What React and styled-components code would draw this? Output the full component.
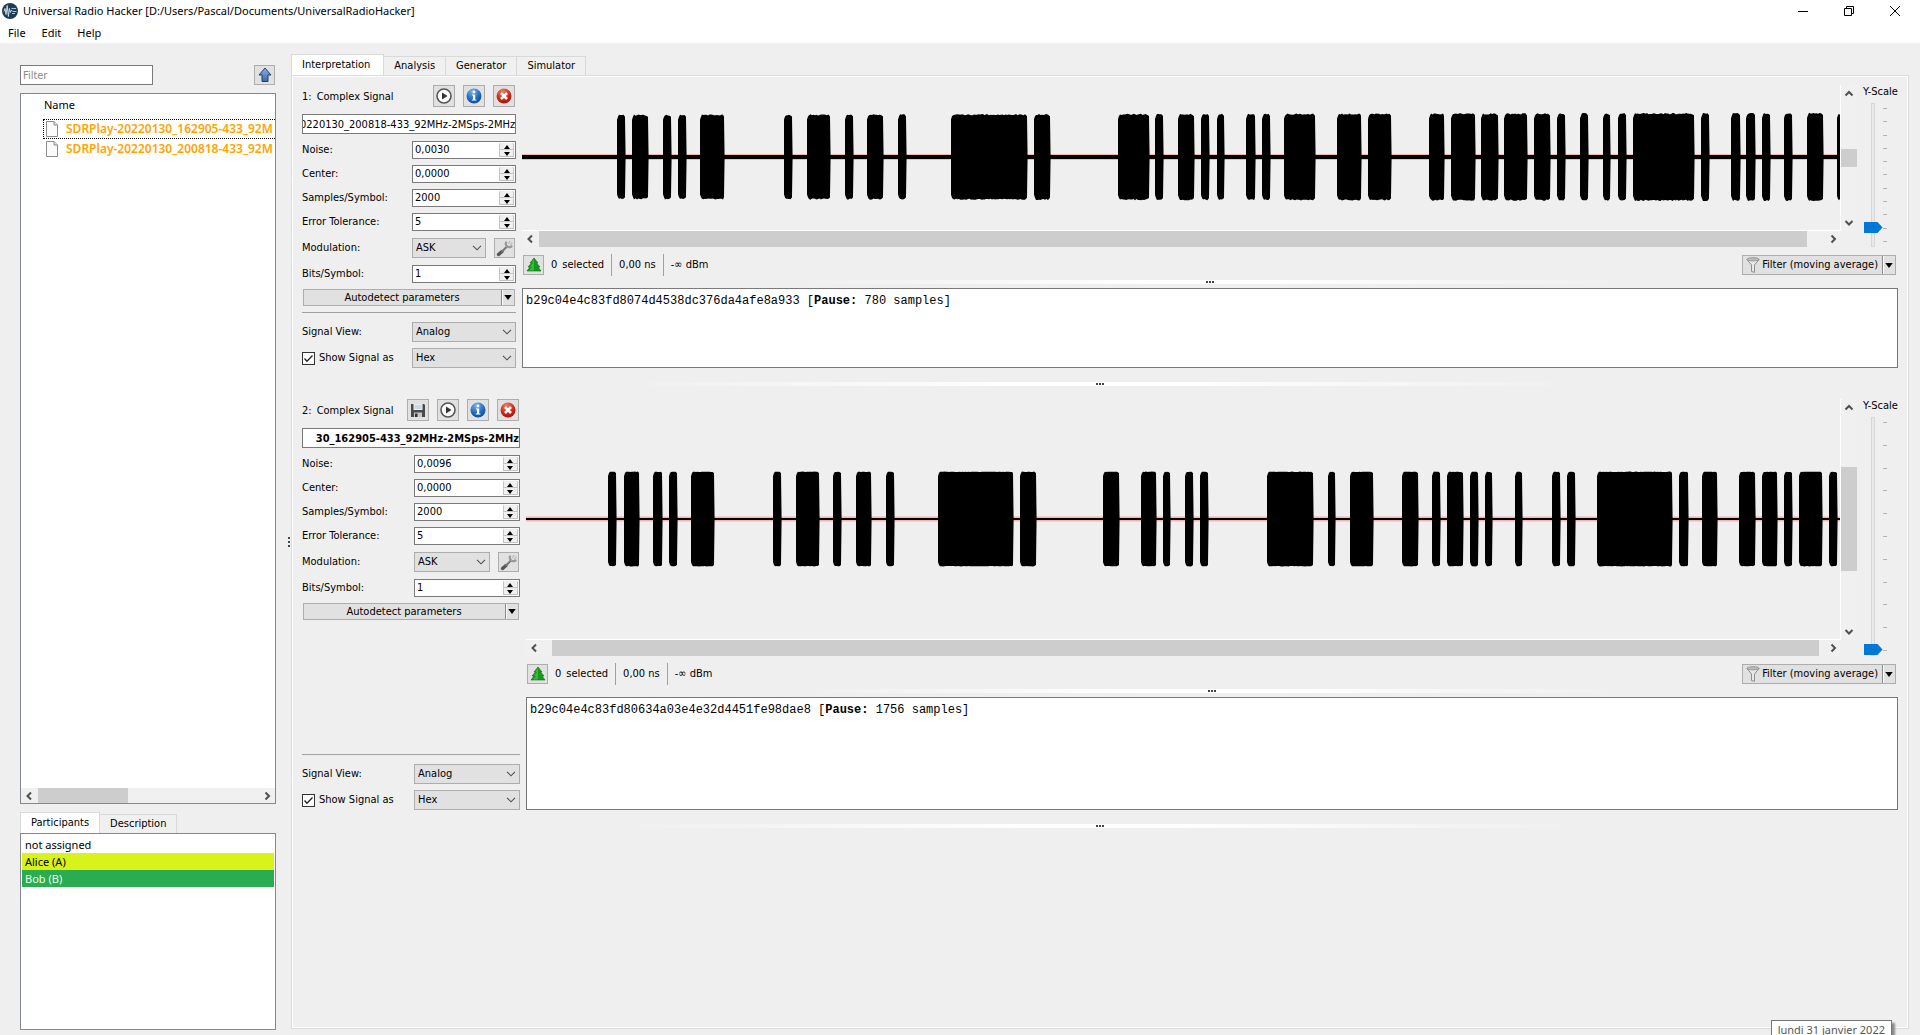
import React from "react"
import styled, { createGlobalStyle } from "styled-components"

const GlobalStyle = createGlobalStyle`
  * {
    box-sizing: border-box;
  }
  body {
    margin: 0;
    background: #efefef;
    color: #000;
    font: 11px/14px "DejaVu Sans Condensed", "DejaVu Sans", sans-serif;
  }
  button, input, select {
    font: inherit;
    color: inherit;
    margin: 0;
    padding: 0;
    border-radius: 0;
  }
`

const segoe = `"Noto Sans", "Open Sans", sans-serif`

/* [start, end] of every burst, in samples on screen */
const burstsA = [
  [95, 103], [110, 126], [141, 149], [156, 164], [178, 202], [262, 270], [285, 308],
  [323, 331], [345, 361], [376, 384], [429, 505], [512, 528], [596, 627], [633, 641],
  [656, 672], [679, 687], [695, 702], [724, 733], [740, 748], [762, 793], [815, 839],
  [846, 869], [907, 922], [929, 953], [959, 976], [982, 1005], [1012, 1028], [1035, 1043],
  [1058, 1066], [1081, 1088], [1096, 1104], [1111, 1172], [1179, 1187], [1209, 1218],
  [1224, 1233], [1240, 1248], [1262, 1270], [1285, 1301], [1315, 1318],
]
const burstsB = [
  [82, 90], [98, 113], [127, 136], [143, 151], [165, 188], [247, 255], [270, 293],
  [307, 315], [330, 345], [360, 368], [412, 487], [494, 510], [577, 593], [615, 630],
  [637, 644], [659, 667], [674, 682], [741, 787], [802, 809], [824, 847], [876, 892],
  [906, 914], [921, 937], [944, 952], [959, 966], [989, 996], [1026, 1034], [1041, 1049],
  [1071, 1146], [1153, 1162], [1176, 1191], [1213, 1229], [1236, 1251], [1258, 1266],
  [1273, 1296], [1303, 1311],
]

const signals = [
  {
    id: 1,
    name: "0220130_200818-433_92MHz-2MSps-2MHz",
    noise: "0,0030",
    controlsWidth: 214,
    viewHeight: 146,
    textHeight: 80,
    bursts: burstsA,
    width: 1318,
    amp: [41, 43],
    jitter: 1.3,
    line: 2,
    noiseBand: 3,
    hThumb: ["0%", "98.7%"],
    vThumb: ["42%", "16%"],
    scale: 10,
    hex: "b29c04e4c83fd8074d4538dc376da4afe8a933",
    pause: "780",
  },
  {
    id: 2,
    name: "30_162905-433_92MHz-2MSps-2MHz",
    noise: "0,0096",
    unsaved: true,
    controlsWidth: 218,
    viewHeight: 241,
    textHeight: 113,
    bursts: burstsB,
    width: 1314,
    amp: [47, 47],
    jitter: 0.4,
    line: 1,
    noiseBand: 2.5,
    hThumb: ["0.7%", "98.9%"],
    vThumb: ["24.6%", "50.2%"],
    scale: 0,
    hex: "b29c04e4c83fd80634a03e4e32d4451fe98dae8",
    pause: "1756",
  },
]

const Window = styled.div`
  position: relative;
  display: flex;
  flex-direction: column;
  min-height: 100vh;
  overflow: hidden;
`
const TitleBar = styled.header`
  display: flex;
  align-items: center;
  gap: 5px;
  height: 22px;
  padding: 0 2px;
  background: #fff;
  font: 11px/20px ${segoe};
`
const Title = styled.span`
  flex: 1;
`
const WindowButtons = styled.div`
  display: flex;
`
const WindowButton = styled.button`
  display: flex;
  justify-content: center;
  width: 46px;
  border: 0;
  background: none;
`
const MenuBar = styled.nav`
  display: flex;
  align-items: center;
  gap: 16px;
  height: 21px;
  padding: 0 8px;
  background: #fff;
  font: 11px/16px ${segoe};
`
const MenuItem = styled.button`
  border: 0;
  background: none;
`
const Body = styled.div`
  display: flex;
  flex: 1;
  padding: 11px 11px 5px 20px;
`

const Sidebar = styled.aside`
  display: flex;
  flex-direction: column;
  width: 256px;
  padding-top: 11px;
`
const FilterRow = styled.div`
  display: flex;
  justify-content: space-between;
  margin-bottom: 8px;
  padding-right: 1px;
`
const FilterInput = styled.input`
  width: 133px;
  height: 20px;
  padding: 0 2px;
  border: 1px solid #7a7a7a;
  background: #fff;
  &::placeholder {
    color: #8a8a8a;
  }
`
const IconButton = styled.button`
  display: flex;
  align-items: center;
  justify-content: center;
  width: ${p => p.$w || 22}px;
  height: ${p => p.$h || 22}px;
  border: 1px solid #adadad;
  background: #e1e1e1;
`
const Tree = styled.div`
  display: flex;
  flex-direction: column;
  flex: 1;
  border: 1px solid #828790;
  background: #fff;
  font: 12px/18px ${segoe};
`
const TreeHeader = styled.div`
  padding: 2px 0 5px 23px;
  font-size: 11px;
`
const TreeItem = styled.button`
  display: flex;
  align-items: center;
  gap: 8px;
  height: 20px;
  margin-left: 22px;
  padding: 0 0 0 2px;
  border: 1px dotted ${p => (p.$focused ? "#000" : "transparent")};
  border-right: 0;
  background: none;
  color: #ffa500;
  font-weight: 600;
  white-space: nowrap;
  overflow: hidden;
`
const TreeFill = styled.div`
  flex: 1;
`

const Tabs = styled.div`
  display: flex;
  align-items: flex-end;
  height: 21px;
`
const Tab = styled.button`
  height: ${p => (p.$active ? 21 : 19)}px;
  padding: 0 10px;
  border: 1px solid #d9d9d9;
  border-width: 1px 1px 0 ${p => (p.$active ? 1 : 0)}px;
  background: ${p => (p.$active ? "#fff" : "#f0f0f0")};
`
const MainTabs = styled(Tabs)`
  ${Tab}:first-child {
    padding-right: 13px;
  }
`
const SideTabs = styled(Tabs)`
  margin-top: 8px;
`
const Participants = styled.ul`
  height: 197px;
  margin: 0;
  padding: 2px 1px;
  border: 1px solid #828790;
  background: #fff;
  list-style: none;
  font: 11px/17px ${segoe};
`
const Participant = styled.li`
  padding-left: 3px;
  background: ${p => p.$bg || "#fff"};
  color: ${p => p.$fg || "#000"};
`

const SideHandle = styled.div`
  display: flex;
  flex-direction: column;
  align-items: flex-end;
  justify-content: center;
  gap: 2px;
  width: 15px;
  padding-right: 1px;
`
const Dot = styled.i`
  width: 2px;
  height: 2px;
  background: #444;
`
const Main = styled.main`
  display: flex;
  flex-direction: column;
  flex: 1;
  min-width: 0;
`
const Pane = styled.div`
  flex: 1;
  margin-bottom: 1px;
  padding: 9px 10px;
  border: 1px solid #dcdcdc;
  box-shadow: inset 1px 1px 0 #fff, inset -1px -1px 0 #fff;
`

const Frame = styled.section`
  display: flex;
  gap: 6px;
`
const Controls = styled.div`
  display: flex;
  flex-direction: column;
  flex-shrink: 0;
  gap: 6px;
  width: ${p => p.$width}px;
`
const ControlsHeader = styled.div`
  display: flex;
  gap: 8px;
  height: 23px;
  padding-right: 1px;
`
const SignalTitle = styled.span`
  display: flex;
  flex: 1;
  gap: 5px;
  padding-top: 5px;
  white-space: nowrap;
`
const NameInput = styled.input`
  width: 100%;
  height: 20px;
  border: 1px solid #7a7a7a;
  background: #fff;
  text-align: right;
  font-weight: ${p => (p.$bold ? "bold" : "normal")};
`
const Fields = styled.div`
  display: grid;
  grid-template-columns: minmax(0, 110fr) minmax(0, 104fr);
  align-items: center;
  gap: 6px 0;
  label {
    white-space: nowrap;
  }
`
const Parameters = styled(Fields)`
  padding-top: 1px;
`
const SpinBox = styled.span`
  display: flex;
  height: 18px;
  padding: 1px;
  border: 1px solid #7a7a7a;
  background: #fff;
  input {
    flex: 1;
    min-width: 0;
    border: 0;
    outline: 0;
    padding-left: 1px;
    background: none;
  }
`
const SpinButtons = styled.span`
  display: flex;
  flex-direction: column;
  width: 15px;
  button {
    display: flex;
    align-items: center;
    justify-content: center;
    height: 7px;
    border: 1px solid #c3c3c3;
    border-top-color: #f0f0f0;
    background: #f0f0f0;
  }
`
const SelectBox = styled.span`
  position: relative;
  display: block;
  flex: 1;
  select {
    display: block;
    width: 100%;
    height: 20px;
    padding-left: 3px;
    border: 1px solid #adadad;
    background: #e1e1e1;
    appearance: none;
  }
  svg {
    position: absolute;
    right: 4px;
    top: 7px;
    pointer-events: none;
  }
`
const ModulationRow = styled.span`
  display: flex;
  align-items: center;
  gap: 8px;
  height: 22px;
  margin-right: 1px;
`
const SplitButton = styled.span`
  display: flex;
  height: ${p => p.$h}px;
  margin: 0 1px;
  border: 1px solid #adadad;
  background: #e1e1e1;
  button {
    display: flex;
    align-items: center;
    justify-content: center;
    gap: 2px;
    border: 0;
    background: none;
    white-space: nowrap;
  }
  button:first-child {
    flex: 1;
    padding: 0 4px 0 3px;
  }
  button:last-child {
    width: 13px;
    border-left: 1px solid #8a8a8a;
    box-shadow: inset 1px 0 0 #fff;
  }
`
const Options = styled(Fields)`
  margin-top: auto;
  padding-top: 9px;
  border-top: 1px solid #a0a0a0;
`
const CheckLabel = styled.label`
  position: relative;
  display: flex;
  align-items: center;
  gap: 4px;
  input {
    width: 13px;
    height: 13px;
    border: 1px solid #333;
    background: #fff;
    appearance: none;
  }
  svg {
    position: absolute;
    left: 1px;
    top: 2px;
  }
`

const Right = styled.div`
  display: flex;
  flex-direction: column;
  flex: 1;
  min-width: 0;
`
const Upper = styled.div`
  display: flex;
  gap: 6px;
`
const Scene = styled.div`
  display: grid;
  grid-template-columns: minmax(0, 1fr) 16px;
  flex: 1;
  min-width: 0;
`
const Wave = styled.svg`
  display: block;
  width: 100%;
  height: ${p => p.$h}px;
  border-right: 1px solid #fff;
  border-bottom: 1px solid #fff;
`
const Scroll = styled.div`
  display: flex;
  flex-direction: ${p => (p.$vertical ? "column" : "row")};
  ${p => (p.$vertical ? "" : `height: ${p.$size || 16}px;`)}
  background: #f0f0f0;
`
const ScrollArrow = styled.button`
  display: flex;
  align-items: center;
  justify-content: center;
  width: ${p => (p.$vertical ? 16 : 17)}px;
  height: ${p => (p.$vertical ? "17px" : "100%")};
  border: 0;
  background: none;
`
const Track = styled.div`
  position: relative;
  flex: 1;
`
const Thumb = styled.div`
  position: absolute;
  inset: 0;
  background: #cdcdcd;
`
const YScale = styled.div`
  display: flex;
  flex-direction: column;
  width: 35px;
  height: ${p => p.$h}px;
  gap: 4px;
  label {
    white-space: nowrap;
  }
`
const SliderRow = styled.div`
  display: flex;
  flex: 1;
  min-height: 0;
`
const Slider = styled.input`
  width: 19px;
  height: 100%;
  writing-mode: vertical-lr;
  direction: rtl;
  appearance: none;
  background: none;
  &::-webkit-slider-runnable-track {
    width: 4px;
    height: 100%;
    border: 1px solid #d6d6d6;
    background: #e7eaea;
  }
  &::-webkit-slider-thumb {
    appearance: none;
    width: 19px;
    height: 11px;
    margin-right: -8px;
    margin-left: -8px;
    background: #0078d7;
    clip-path: polygon(0 0, 14px 0, 100% 50%, 14px 100%, 0 100%);
  }
`
const Ticks = styled.div`
  display: flex;
  flex-direction: column;
  justify-content: space-between;
  padding: 5px 0;
  margin-left: 1px;
  i {
    width: 4px;
    height: 1px;
    background: #b5b5b5;
  }
`
const Toolbar = styled.div`
  display: flex;
  align-items: center;
  gap: 7px;
  height: 20px;
  margin: 8px 1px 0;
`
const Count = styled.span`
  display: flex;
  gap: 5px;
`
const Divider = styled.i`
  width: 1px;
  height: 22px;
  background: #a0a0a0;
`
const Spacer = styled.span`
  flex: 1;
`
const Handle = styled.div`
  display: flex;
  align-items: center;
  justify-content: center;
  gap: 1px;
  height: ${p => p.$h}px;
  background: linear-gradient(90deg, transparent 20%, #fff 45%, #fff 55%, transparent 80%) center / 100% 4px no-repeat;
`
const MessageText = styled.div`
  height: ${p => p.$h}px;
  padding: 5px 3px;
  border: 1px solid #7a7a7a;
  background: #fff;
  font: 12px/14px "Liberation Mono", monospace;
`
const DateTip = styled.div`
  position: absolute;
  right: 28px;
  bottom: -6px;
  height: 21px;
  padding: 0 6px;
  border: 1px solid #767676;
  background: #fff;
  color: #575757;
  box-shadow: 3px 3px 2px #8a8a8a;
  font: 11px/18px ${segoe};
`

const chevrons = {
  left: "M6 1.5 2.5 5 6 8.5",
  right: "M3.5 1.5 7 5 3.5 8.5",
  up: "M1.5 6.5 5 3 8.5 6.5",
  down: "M1.5 3 5 6.5 8.5 3",
}
const Chevron = ({ dir }) => (
  <svg width="10" height="10" viewBox="0 0 10 10" fill="none" stroke="#505050" strokeWidth="2">
    <path d={chevrons[dir]} />
  </svg>
)
const SelectArrow = () => (
  <svg width="10" height="6" viewBox="0 0 10 6" fill="none" stroke="#505050" strokeWidth="1.1">
    <path d="M1 .8 5 4.8 9 .8" />
  </svg>
)
const Triangle = ({ up, size = 6 }) => (
  <svg width={size} height={size > 6 ? 5 : 4} viewBox="0 0 6 4">
    <path d={up ? "M3 0 6 4H0z" : "M0 0h6L3 4z"} />
  </svg>
)
const AppIcon = () => (
  <svg width="16" height="16" viewBox="0 0 16 16">
    <circle cx="8" cy="8" r="8" fill="#1d3c55" />
    <path d="M2 8.5l1-3 1 6 1.2-9 1.2 11 1-8 1 4 .8-2h1" fill="none" stroke="#d5e6f1" strokeWidth=".9" />
    <path d="M9.5 5.5h4.5M10.5 8.5h4M10 10.5h3" stroke="#a9c7da" strokeWidth="1" />
  </svg>
)
const UpIcon = () => (
  <svg width="14" height="16" viewBox="0 0 14 16">
    <defs>
      <linearGradient id="up" x2="0" y2="1">
        <stop offset="0" stopColor="#8fb0dc" />
        <stop offset="1" stopColor="#3c67a8" />
      </linearGradient>
    </defs>
    <path d="M7 1 13 8H10v6.5H4V8H1z" fill="url(#up)" stroke="#1f3f70" strokeLinejoin="round" />
  </svg>
)
const FileIcon = () => (
  <svg width="12" height="16" viewBox="0 0 12 16" fill="#fbfbfb" stroke="#8c8c8c">
    <path d="M.5.5h7.5l3.5 3.5v11.5H.5z" />
    <path d="M8 .5V4h3.5" fill="#e2e2e2" />
  </svg>
)
const SaveIcon = () => (
  <svg width="16" height="16" viewBox="0 0 16 16">
    <path d="M1 2h13l1 1v12H1z" fill="#4a4a4a" />
    <path d="M3.5 2h9v6h-9z" fill="#e9f0f4" />
    <path d="M4.5 4h7M4.5 6h7" stroke="#9fb4be" strokeWidth=".8" />
    <path d="M4 10.5h8V15H4z" fill="#c9c9c9" />
    <path d="M5 11.5h2.5V15H5z" fill="#333" />
  </svg>
)
const PlayIcon = () => (
  <svg width="16" height="16" viewBox="0 0 16 16">
    <circle cx="8" cy="8" r="7" fill="#fafafa" stroke="#555" strokeWidth="1.6" />
    <path d="M6 4.5 11.5 8 6 11.5z" fill="#333" />
  </svg>
)
const InfoIcon = () => (
  <svg width="16" height="16" viewBox="0 0 16 16">
    <defs>
      <radialGradient id="info" cx=".4" cy=".2" r=".9">
        <stop offset="0" stopColor="#7db4ec" />
        <stop offset=".6" stopColor="#1f66b8" />
        <stop offset="1" stopColor="#0d458f" />
      </radialGradient>
    </defs>
    <circle cx="8" cy="8" r="7.5" fill="url(#info)" />
    <circle cx="8" cy="4" r="1.4" fill="#fff" />
    <path d="M6 6.5h3.2V11.5h1.2v1H5.8v-1H7V7.5H6z" fill="#fff" />
  </svg>
)
const CloseIcon = () => (
  <svg width="16" height="16" viewBox="0 0 16 16">
    <defs>
      <radialGradient id="close" cx=".4" cy=".2" r=".9">
        <stop offset="0" stopColor="#f07a62" />
        <stop offset=".6" stopColor="#cc2617" />
        <stop offset="1" stopColor="#930f06" />
      </radialGradient>
    </defs>
    <circle cx="8" cy="8" r="7.5" fill="url(#close)" />
    <path d="M5 5l6 6M11 5l-6 6" stroke="#fff" strokeWidth="2.6" />
  </svg>
)
const WrenchIcon = () => (
  <svg width="17" height="17" viewBox="0 0 17 17" fill="none" strokeLinecap="round">
    <path d="M2.5 14.5 6 11.5" stroke="#555" strokeWidth="3.4" />
    <path d="M6 11.5 11 6.5" stroke="#777" strokeWidth="2" />
    <path d="M10 2.5c-1 3 2 6 5.5 4" stroke="#999" strokeWidth="2.2" />
    <path d="M12.5 3.5 14 1.5M14.5 5 16 3" stroke="#b5b5b5" strokeWidth="1.2" />
  </svg>
)
const TreeIcon = () => (
  <svg width="16" height="16" viewBox="0 0 16 16">
    <path d="M8 1 12 6h-1.5L14 10h-2l3 4H1l3-4H2l3.500-4H4z" fill="#169a1c" stroke="#0b6b10" strokeWidth=".6" />
    <path d="M8 2 5.5 5.5 7 6 4 9.5l2 .5L3 13.5h5z" fill="#6ccf5d" opacity=".5" />
  </svg>
)
const FunnelIcon = () => (
  <svg width="14" height="16" viewBox="0 0 14 16">
    <path d="M1 2.5 5.5 8v6.5l3 .8V8L13 2.5z" fill="#e9e9e9" stroke="#8f8f8f" />
    <ellipse cx="7" cy="2.3" rx="6" ry="1.6" fill="#bdbdbd" stroke="#8a8a8a" strokeWidth=".8" />
  </svg>
)

const wobble = i => Math.abs(Math.sin(i * 12.9898) * 43758.5453) % 1

/* one closed outline per burst: soft attack, ragged top and bottom, steep decay */
const burstPath = ([a, b], amp, jitter) => {
  const top = []
  const bottom = []
  for (let x = a + 2; x <= b - 1; x += 1.5) {
    top.push(`${x} ${-(amp + wobble(x) * jitter)}`)
    bottom.unshift(`${x} ${amp + wobble(x + 7) * jitter}`)
  }
  return `M${a} 12L${a} ${-amp + 4}L${a + 1} ${-amp + 1}L${top.join("L")}L${b} ${-amp + 1}L${b + 0.6} 0L${b} ${amp - 1}L${bottom.join("L")}L${a + 1} ${amp - 1}L${a} ${amp - 4}z`
}

const Waveform = ({ signal }) => {
  const { viewHeight, width: w, amp, jitter, line, noiseBand, bursts } = signal
  const h = viewHeight - 1
  return (
    <Wave $h={viewHeight} viewBox={`0 ${-Math.floor(h / 2)} ${w} ${h}`} preserveAspectRatio="none">
      <rect y={-noiseBand} width={w} height={noiseBand * 2} fill="#f7b4b4" />
      <rect y={-line} width={w} height={line * 2} />
      {bursts.map(burst => (
        <path key={burst[0]} d={burstPath(burst, amp[0] + ((amp[1] - amp[0]) * burst[0]) / w, jitter)} />
      ))}
    </Wave>
  )
}

const ScrollBar = ({ vertical, thumb, size }) => (
  <Scroll $vertical={vertical} $size={size}>
    <ScrollArrow $vertical={vertical} aria-label={vertical ? "Scroll up" : "Scroll left"}>
      <Chevron dir={vertical ? "up" : "left"} />
    </ScrollArrow>
    <Track>
      <Thumb style={vertical ? { top: thumb[0], height: thumb[1] } : { left: thumb[0], width: thumb[1] }} />
    </Track>
    <ScrollArrow $vertical={vertical} aria-label={vertical ? "Scroll down" : "Scroll right"}>
      <Chevron dir={vertical ? "down" : "right"} />
    </ScrollArrow>
  </Scroll>
)

const Spin = ({ id, label, value }) => (
  <>
    <label htmlFor={id}>{label}</label>
    <SpinBox>
      <input id={id} type="text" defaultValue={value} />
      <SpinButtons>
        <button aria-label="Increase"><Triangle up /></button>
        <button aria-label="Decrease"><Triangle /></button>
      </SpinButtons>
    </SpinBox>
  </>
)

const Select = ({ id, value, label }) => (
  <SelectBox>
    <select id={id} defaultValue={value} aria-label={label}>
      <option>{value}</option>
    </select>
    <SelectArrow />
  </SelectBox>
)

const Dots = () => (
  <>
    <Dot />
    <Dot />
    <Dot />
  </>
)

/* long names show their end */
const scrollToEnd = input => {
  if (input) input.scrollLeft = input.scrollWidth
}

const SignalFrame = ({ signal }) => {
  const id = name => `${name}-${signal.id}`
  return (
    <Frame>
      <Controls $width={signal.controlsWidth}>
        <ControlsHeader>
          <SignalTitle>
            <span>{signal.id}:</span>
            <span>Complex Signal</span>
          </SignalTitle>
          {signal.unsaved && <IconButton aria-label="Save"><SaveIcon /></IconButton>}
          <IconButton aria-label="Play"><PlayIcon /></IconButton>
          <IconButton aria-label="Info"><InfoIcon /></IconButton>
          <IconButton aria-label="Close"><CloseIcon /></IconButton>
        </ControlsHeader>
        <NameInput ref={scrollToEnd} $bold={signal.unsaved} defaultValue={signal.name} aria-label="Signal name" />
        <Parameters>
          <Spin id={id("noise")} label="Noise:" value={signal.noise} />
          <Spin id={id("center")} label="Center:" value="0,0000" />
          <Spin id={id("samples")} label="Samples/Symbol:" value="2000" />
          <Spin id={id("tolerance")} label="Error Tolerance:" value="5" />
          <label htmlFor={id("modulation")}>Modulation:</label>
          <ModulationRow>
            <Select id={id("modulation")} value="ASK" />
            <IconButton $w={21} $h={20} aria-label="Modulation settings"><WrenchIcon /></IconButton>
          </ModulationRow>
          <Spin id={id("bits")} label="Bits/Symbol:" value="1" />
        </Parameters>
        <SplitButton $h={17}>
          <button>Autodetect parameters</button>
          <button aria-label="More"><Triangle size={8} /></button>
        </SplitButton>
        <Options>
          <label htmlFor={id("view")}>Signal View:</label>
          <Select id={id("view")} value="Analog" />
          <CheckLabel>
            <input type="checkbox" defaultChecked />
            <svg width="11" height="11" viewBox="0 0 11 11" fill="none" stroke="#222" strokeWidth="1.3">
              <path d="M1.5 5.5 4 8.2 9.5 2.5" />
            </svg>
            Show Signal as
          </CheckLabel>
          <Select id={id("format")} value="Hex" label="Show Signal as" />
        </Options>
      </Controls>
      <Right>
        <Upper>
          <Scene>
            <Waveform signal={signal} />
            <ScrollBar vertical thumb={signal.vThumb} />
            <ScrollBar thumb={signal.hThumb} />
          </Scene>
          <YScale $h={signal.viewHeight + 16}>
            <label htmlFor={id("yscale")}>Y-Scale</label>
            <SliderRow>
              <Slider id={id("yscale")} type="range" min="0" max="100" defaultValue={signal.scale} />
              <Ticks>
                {[...Array(11)].map((_, i) => <i key={i} />)}
              </Ticks>
            </SliderRow>
          </YScale>
        </Upper>
        <Toolbar>
          <IconButton $w={21} $h={20} aria-label="Crop"><TreeIcon /></IconButton>
          <Count>
            <span>0</span>
            <span>selected</span>
          </Count>
          <Divider />
          <span>0,00 ns</span>
          <Divider />
          <span>-∞ dBm</span>
          <Spacer />
          <SplitButton $h={20}>
            <button><FunnelIcon />Filter (moving average)</button>
            <button aria-label="More"><Triangle size={8} /></button>
          </SplitButton>
        </Toolbar>
        <Handle $h={13}><Dots /></Handle>
        <MessageText $h={signal.textHeight} role="textbox" aria-label="Decoded signal" contentEditable suppressContentEditableWarning>
          {signal.hex} [<b>Pause:</b> {signal.pause} samples]
        </MessageText>
      </Right>
    </Frame>
  )
}

export default () => (
  <Window>
    <GlobalStyle />
    <TitleBar>
      <AppIcon />
      <Title>Universal Radio Hacker [D:/Users/Pascal/Documents/UniversalRadioHacker]</Title>
      <WindowButtons>
        <WindowButton aria-label="Minimize">
          <svg width="10" height="10"><path d="M0 5.5h10" stroke="#000" /></svg>
        </WindowButton>
        <WindowButton aria-label="Restore">
          <svg width="10" height="10" fill="none" stroke="#000"><path d="M.5 2.5h7v7h-7zM2.5 2.5v-2h7v7h-2" /></svg>
        </WindowButton>
        <WindowButton aria-label="Close window">
          <svg width="10" height="10" stroke="#000"><path d="M0 0l10 10M10 0 0 10" /></svg>
        </WindowButton>
      </WindowButtons>
    </TitleBar>
    <MenuBar>
      <MenuItem>File</MenuItem>
      <MenuItem>Edit</MenuItem>
      <MenuItem>Help</MenuItem>
    </MenuBar>
    <Body>
      <Sidebar>
        <FilterRow>
          <FilterInput placeholder="Filter" aria-label="Filter files" />
          <IconButton $w={21} $h={20} aria-label="Go up"><UpIcon /></IconButton>
        </FilterRow>
        <Tree>
          <TreeHeader>Name</TreeHeader>
          <TreeItem $focused><FileIcon />SDRPlay-20220130_162905-433_92M</TreeItem>
          <TreeItem><FileIcon />SDRPlay-20220130_200818-433_92M</TreeItem>
          <TreeFill />
          <ScrollBar thumb={["0%", "41%"]} size={15} />
        </Tree>
        <SideTabs>
          <Tab $active>Participants</Tab>
          <Tab>Description</Tab>
        </SideTabs>
        <Participants>
          <Participant>not assigned</Participant>
          <Participant $bg="#d9f21a">Alice (A)</Participant>
          <Participant $bg="#2aac51" $fg="#e8ffe8">Bob (B)</Participant>
        </Participants>
      </Sidebar>
      <SideHandle><Dots /></SideHandle>
      <Main>
        <MainTabs>
          <Tab $active>Interpretation</Tab>
          <Tab>Analysis</Tab>
          <Tab>Generator</Tab>
          <Tab>Simulator</Tab>
        </MainTabs>
        <Pane>
          {signals.map(signal => (
            <React.Fragment key={signal.id}>
              <SignalFrame signal={signal} />
              <Handle $h={31}><Dots /></Handle>
            </React.Fragment>
          ))}
        </Pane>
      </Main>
    </Body>
    <DateTip>lundi 31 janvier 2022</DateTip>
  </Window>
)
